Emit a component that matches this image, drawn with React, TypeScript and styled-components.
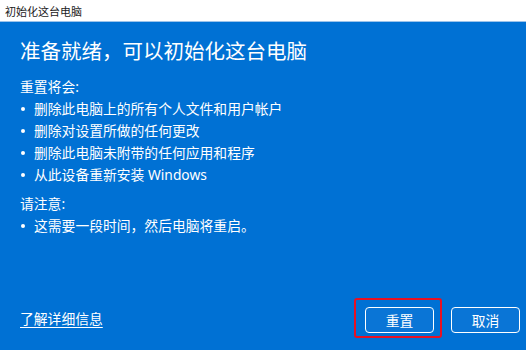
import styled, { createGlobalStyle } from "styled-components";

const GlobalStyle = createGlobalStyle`
  html, body {
    margin: 0;
    padding: 0;
  }
  body {
    font-family: "Noto Sans", "Noto Sans CJK SC", sans-serif;
    background: #0071d4;
  }
`;

const Window = styled.div`
  width: 526px;
  height: 350px;
  display: flex;
  flex-direction: column;
  background: #0071d4;
  color: #ffffff;
  overflow: hidden;
`;

const TitleBar = styled.div`
  height: 22px;
  flex-shrink: 0;
  background: #ffffff;
  border-bottom: 1px solid #9cc3ea;
  box-sizing: border-box;
  display: flex;
  align-items: center;
  padding-left: 5px;
  font-size: 11px;
  color: #1a1a1a;
`;

const Body = styled.div`
  flex: 1;
  display: flex;
  flex-direction: column;
  padding: 14px 20px 12px 20px;
`;

const Heading = styled.h1`
  margin: 0 0 10px 0;
  font-size: 20.5px;
  font-weight: 400;
  line-height: 30px;
`;

const Label = styled.div<{ $gap?: number }>`
  font-size: 13.8px;
  line-height: 22px;
  margin-top: ${(p) => p.$gap ?? 0}px;
`;

const List = styled.ul`
  list-style: none;
  margin: 0;
  padding: 0;
`;

const Item = styled.li`
  position: relative;
  padding-left: 14px;
  font-size: 13.8px;
  line-height: 22px;
  &::before {
    content: "";
    position: absolute;
    left: 1px;
    top: 9px;
    width: 4px;
    height: 4px;
    border-radius: 50%;
    background: #ffffff;
  }
`;

const Footer = styled.div`
  margin-top: auto;
  display: flex;
  align-items: center;
  justify-content: space-between;
`;

const Link = styled.a`
  color: #ffffff;
  font-size: 13.8px;
  text-decoration: underline;
  text-underline-offset: 3px;
  cursor: pointer;
`;

const Buttons = styled.div`
  display: flex;
  align-items: center;
  gap: 9px;
  margin-right: -14px;
`;

const Focus = styled.div`
  padding: 7px 6px 3px 9px;
  border: 2px solid #e81123;
  border-radius: 3px;
  display: flex;
`;

const Button = styled.button`
  width: 69px;
  height: 26px;
  box-sizing: border-box;
  background: #0a75d6;
  border: 1.5px solid #ffffff;
  border-radius: 4px;
  color: #ffffff;
  font-family: inherit;
  font-size: 13.8px;
  display: flex;
  align-items: center;
  justify-content: center;
  padding: 0;
`;

const Plain = styled.div`
  padding-top: 4px;
  display: flex;
`;

export default function App() {
  return (
    <>
      <GlobalStyle />
      <Window>
        <TitleBar>初始化这台电脑</TitleBar>
        <Body>
          <Heading>准备就绪，可以初始化这台电脑</Heading>
          <Label>重置将会:</Label>
          <List>
            <Item>删除此电脑上的所有个人文件和用户帐户</Item>
            <Item>删除对设置所做的任何更改</Item>
            <Item>删除此电脑未附带的任何应用和程序</Item>
            <Item>从此设备重新安装 Windows</Item>
          </List>
          <Label $gap={7}>请注意:</Label>
          <List>
            <Item>这需要一段时间，然后电脑将重启。</Item>
          </List>
          <Footer>
            <Link>了解详细信息</Link>
            <Buttons>
              <Focus>
                <Button>重置</Button>
              </Focus>
              <Plain>
                <Button>取消</Button>
              </Plain>
            </Buttons>
          </Footer>
        </Body>
      </Window>
    </>
  );
}
